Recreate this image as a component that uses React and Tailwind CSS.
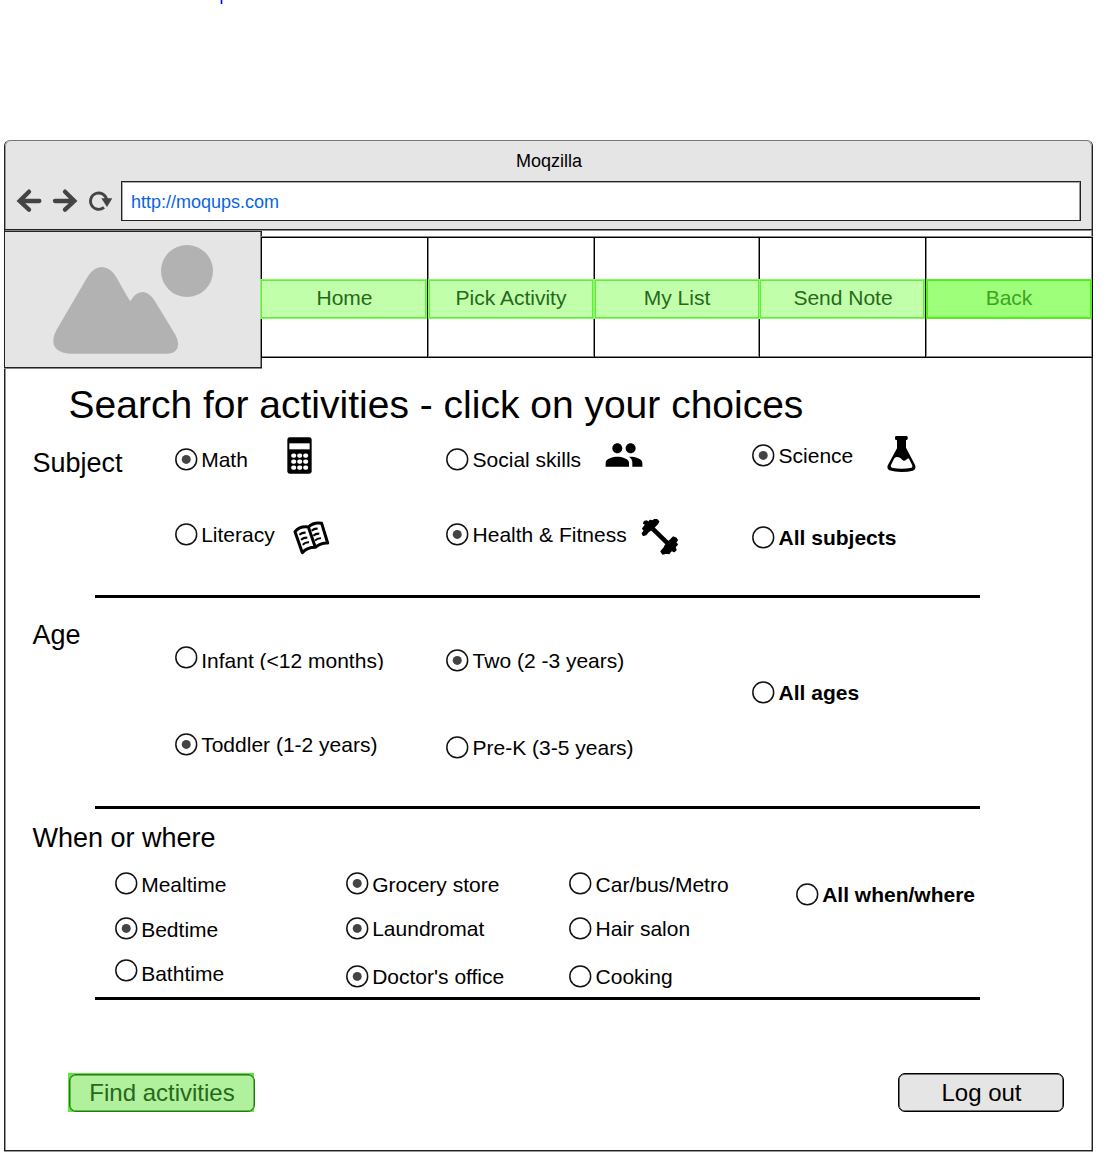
import React from "react";
import { MdPeople } from "react-icons/md";

function Option({ label, on, bold, className = "", textClass = "", children }) {
  return (
    <div className={`flex h-6 items-start ${className}`}>
      <svg className="h-6 w-[23px] shrink-0" viewBox="0 0 23 24">
        <circle cx="11.25" cy="11.4" r="10.4" fill="#fff" stroke="#111" strokeWidth="1.5" />
        {on && <circle cx="11.25" cy="11.4" r="4.5" fill="#444" />}
      </svg>
      <span
        className={`ml-[3.2px] h-6 whitespace-nowrap text-[21px] leading-6 ${bold ? "font-bold" : ""} ${textClass}`}
      >
        {label}
      </span>
      {children}
    </div>
  );
}

function Rule({ className = "" }) {
  return <div className={`ml-[90px] h-[3px] w-[885px] shrink-0 bg-black ${className}`} />;
}

function BrowserButtons() {
  return (
    <svg className="h-[26px] w-[100px]" viewBox="44 173 300 78" fill="none" stroke="#444">
      <g strokeWidth="13" strokeLinecap="round">
        <path d="M60 212H117M86 184L58 212L86 238" />
        <path d="M164 212H222M194 184L222 212L194 238" />
      </g>
      <path d="M319 208A24.5 24.5 0 1 0 311 231" strokeWidth="8.5" />
      <path d="M303 204H336L320 230Z" fill="#444" stroke="none" />
    </svg>
  );
}

function Calculator() {
  const keys = [0, 1, 2].flatMap((r) => [0, 1, 2].map((c) => [401 + c * 18, 92 + r * 18]));
  return (
    <svg className="h-[37px] w-[25px]" viewBox="381 36 75 111">
      <rect x="382" y="37" width="73" height="109" rx="7" />
      <rect x="388" y="55" width="61" height="18" fill="#fff" />
      {keys.map(([x, y]) => (
        <rect key={`${x}-${y}`} x={x - 7.5} y={y - 6.5} width="15" height="13" rx="6" fill="#fff" />
      ))}
    </svg>
  );
}

function Book() {
  return (
    <svg className="h-[34px] w-[37px]" viewBox="400 287 111 102" fill="none" stroke="#000">
      <path
        d="M406 319Q420 302 446 305Q462 290 486 294L504 353Q483 352 467 366Q442 366 428 382ZM446 305L467 366"
        strokeWidth="9"
        strokeLinejoin="round"
      />
      <path
        d="M419 328Q428 321 438 322M424 343Q433 336 443 337M429 358Q438 350 448 351M456 316Q464 309 474 310M461 331Q469 324 479 325M466 346Q474 338 484 339"
        strokeWidth="6"
      />
    </svg>
  );
}

function Dumbbell() {
  return (
    <svg className="size-12" viewBox="0 0 144 144" stroke="#000" strokeWidth="4" strokeLinejoin="round">
      <path d="M25 29L32 27L38 31L42 25L48 27L56 23H63L68 29L64 36L60 40L54 46L57 50L97 89L104 83L112 75L120 78L124 84L119 91L124 97L117 105L120 114L114 119L108 115L103 119L99 125L90 123L80 126L75 118L84 108L88 100L91 97L50 57L46 53L38 58L30 68L22 70L19 64L25 56L20 50L26 42L30 38L23 34Z" />
    </svg>
  );
}

function Flask() {
  return (
    <svg className="h-9 w-[29px]" viewBox="442 33 87 108">
      <path d="M466 36Q466 33 470 33H500Q504 33 504 36V42Q504 45 499 46V68L525 118Q532 132 520 137Q505 141 485 141Q465 141 449 136Q439 130 446 118L472 70V46Q466 45 466 42Z" />
      <path
        d="M464 100Q470 94 477 97Q484 99 488 105Q493 110 499 105Q503 100 508 101L517 119Q521 127 512 129Q485 133 460 129Q450 127 455 118Z"
        fill="#fff"
      />
    </svg>
  );
}

function Picture() {
  return (
    <svg className="h-[137px] w-[258px]" viewBox="12 303 774 411" fill="#b2b2b2">
      <circle cx="561" cy="423" r="78" />
      <path d="M305 411Q331 411 350 443Q378 494 391 514Q405 487 427 486Q447 486 464 512L527 616Q542 646 527 662Q518 671 500 671H210Q160 667 160 632Q160 617 170 599L261 443Q280 411 305 411Z" />
    </svg>
  );
}

const single = "border-[#8cf568] bg-[#c2ffab] text-[#26691a] shadow-[inset_0_0_0_1px_#5eee3c]";
const double = "border-[#5cec2c] bg-[#9eff7b] text-[#3da51f] shadow-[inset_0_0_0_1px_#48ee16]";

const cells = [
  { label: "Home", cell: "w-[166px] border-r shadow-[1px_0_#888]", band: "-ml-[2px] w-[167px] pl-[2px]", tone: single },
  { label: "Pick Activity", cell: "w-[167px] border-r shadow-[inset_-1px_0_#888]", band: "w-[166px]", tone: single },
  { label: "My List", cell: "w-[165px] border-r shadow-[inset_-1px_0_#888]", band: "-ml-px w-[166px]", tone: single },
  { label: "Send Note", cell: "w-[166px] border-r shadow-[1px_0_#888]", band: "-ml-px w-[166px] pl-[2px]", tone: single },
  { label: "Back", cell: "w-[166px]", band: "w-[166px]", tone: double },
];

export default function App() {
  return (
    <div
      className="flex h-[1157px] w-[1107px] flex-col overflow-hidden bg-white text-black"
      style={{ fontFamily: '"Liberation Sans", Arial, sans-serif' }}
    >
      <div className="h-[140px] shrink-0 pl-[220px]">
        <div className="h-1 w-[3px] border-x border-[#b4b4ff] bg-[#0000ee]" />
      </div>

      <main className="ml-1 flex h-[1011px] w-[1089px] flex-col rounded-t-[6px] border-x border-b border-t border-[#222] border-t-[#777] shadow-[inset_1px_0_#999,inset_-1px_0_#999,0_1px_#999]">
        <header className="flex h-[89px] shrink-0 flex-col rounded-t-[5px] border-b border-[#222] bg-[#e5e5e5] shadow-[0_1px_#888,inset_1px_0_#999,inset_-1px_0_#999]">
          <div className="h-10 pl-px text-center text-[18px] leading-10">Moqzilla</div>
          <div className="flex items-center">
            <div className="ml-[10px] w-[106px]">
              <BrowserButtons />
            </div>
            <div className="flex h-10 w-[960px] items-center border border-[#222] bg-white pl-[9px] pt-[2px] text-[18px] text-[#0964e4] shadow-[inset_1px_1px_#aaa,inset_-1px_0_#999]">
              http://moqups.com
            </div>
          </div>
        </header>

        <div className="-ml-px mt-px flex h-[138px] w-[1089px] shrink-0">
          <div className="h-[137px] w-[258px] shrink-0 border border-[#222] bg-[#e5e5e5] shadow-[inset_-1px_0_#888,0_1px_#888]">
            <div className="-ml-px -mt-px w-[256px] overflow-hidden">
              <Picture />
            </div>
          </div>
          <nav className="-ml-px mt-[6px] flex h-[121px] border border-black shadow-[0_-1px_#888,inset_0_-1px_#888]">
            {cells.map((c) => (
              <div key={c.label} className={`flex h-full items-center border-black ${c.cell}`}>
                <div
                  className={`mt-[3px] flex h-10 shrink-0 items-center justify-center border text-[21px] ${c.band} ${c.tone}`}
                >
                  <span className="-mt-[3px] whitespace-nowrap">{c.label}</span>
                </div>
              </div>
            ))}
          </nav>
        </div>

        <h1 className="ml-[63.6px] mt-[12px] h-12 shrink-0 whitespace-nowrap text-[39px] leading-[48px]">
          Search for activities - click on your choices
        </h1>

        <section className="flex h-[166px] shrink-0">
          <h2 className="ml-[27.5px] mt-[18px] w-[142.5px] text-[27px] leading-8">Subject</h2>
          <div className="w-[271.4px] pt-[19px]">
            <Option label="Math" on>
              <div className="-mt-[11px] ml-[39px]">
                <Calculator />
              </div>
            </Option>
            <Option label="Literacy" className="mt-[51px]">
              <div className="-mt-[2px] ml-[18.5px]">
                <Book />
              </div>
            </Option>
          </div>
          <div className="w-[306px] pt-[19px]">
            <Option label="Social skills">
              <MdPeople className="-mt-[13px] ml-[23px] shrink-0" size={40} />
            </Option>
            <Option label="Health & Fitness" on className="mt-[51px]">
              <div className="-mt-[11px] ml-[9px]">
                <Dumbbell />
              </div>
            </Option>
          </div>
          <div className="pt-[15px]">
            <Option label="Science" on>
              <div className="-mt-2 ml-[34px]">
                <Flask />
              </div>
            </Option>
            <Option label="All subjects" bold className="mt-[58px]" />
          </div>
        </section>
        <Rule />

        <section className="flex h-[208px] shrink-0">
          <h2 className="ml-[27.5px] mt-[21px] w-[142.5px] text-[27px] leading-8">Age</h2>
          <div className="w-[271.4px] pt-12">
            <Option label="Infant (<12 months)" textClass="mt-[3px] overflow-hidden h-[21px]" />
            <Option label="Toddler (1-2 years)" on className="mt-[63px]" />
          </div>
          <div className="w-[306px] pt-[51px]">
            <Option label="Two (2 -3 years)" on />
            <Option label="Pre-K (3-5 years)" className="mt-[63px]" />
          </div>
          <div className="pt-[83px]">
            <Option label="All ages" bold />
          </div>
        </section>
        <Rule />

        <section className="h-[188px] shrink-0">
          <h2 className="ml-[27.5px] pt-[13px] text-[27px] leading-8">When or where</h2>
          <div className="ml-[110px] mt-[18px] flex">
            <div className="w-[231px]">
              <Option label="Mealtime" textClass="mt-px" />
              <Option label="Bedtime" on className="mt-[21px]" textClass="mt-px" />
              <Option label="Bathtime" className="mt-[18px]" textClass="mt-[3px]" />
            </div>
            <div className="w-[223.4px]">
              <Option label="Grocery store" on textClass="mt-px" />
              <Option label="Laundromat" on className="mt-[21px]" />
              <Option label="Doctor's office" on className="mt-6" />
            </div>
            <div className="w-[226.6px]">
              <Option label="Car/bus/Metro" textClass="mt-px" />
              <Option label="Hair salon" className="mt-[21px]" />
              <Option label="Cooking" className="mt-6" />
            </div>
            <Option label="All when/where" bold className="mt-[11px]" />
          </div>
        </section>
        <Rule />

        <footer className="mt-[73px] flex justify-between pl-[63px] pr-[28px]">
          <div className="h-[39px] w-[186px] bg-[#5de83a] p-px">
            <button className="flex h-[38px] w-[186px] items-center justify-center rounded-[7px] border border-[#1f7d10] bg-[#b1f09c] text-2xl text-[#26691a] shadow-[inset_0_0_0_0.5px_#1f7d10]">
              Find activities
            </button>
          </div>
          <button className="flex h-[39px] w-[166px] items-center justify-center rounded-[7px] border border-black bg-[#e5e5e5] pl-px text-2xl shadow-[inset_0_0_0_0.5px_#000]">
            Log out
          </button>
        </footer>
      </main>
    </div>
  );
}
